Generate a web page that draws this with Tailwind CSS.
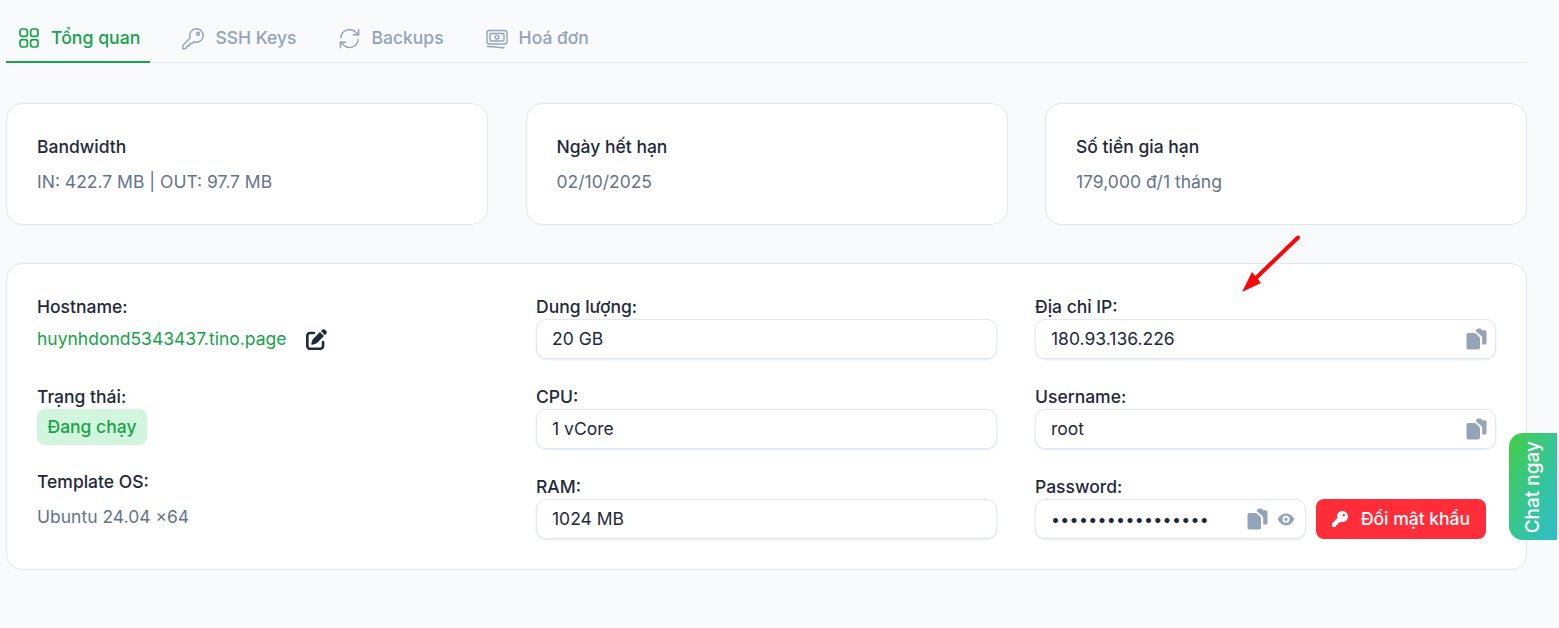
<!DOCTYPE html>
<html lang="vi">
<head>
<meta charset="utf-8">
<title>Tổng quan</title>
<script src="https://cdn.jsdelivr.net/npm/@tailwindcss/browser@4"></script>
</head>
<body class="bg-[#f8fafc] font-['Inter',sans-serif] text-[#1e293b] text-[17.5px] overflow-hidden">
<div class="relative w-[1559px] h-[628px] overflow-hidden">
  <div class="ml-[6px] w-[1521px] pt-[13px]">
    <nav class="flex h-[50px] border-b border-[#e2e8f0]">
      <div class="flex items-center gap-[11px] pl-[12px] pr-[10px] pt-[2px] h-[50px] border-b-2 border-[#16a34a] text-[#16a34a] font-medium">
        <svg class="w-[22px] h-[22px]" viewBox="0 0 22 22" fill="none" stroke="currentColor" stroke-width="1.7"><rect x="2" y="2" width="7.4" height="7.4" rx="2.4"/><rect x="12.6" y="2" width="7.4" height="7.4" rx="2.4"/><rect x="2" y="12.6" width="7.4" height="7.4" rx="2.4"/><rect x="12.6" y="12.6" width="7.4" height="7.4" rx="2.4"/></svg>
        <span class="text-[17.7px]">Tổng quan</span>
      </div>
      <div class="flex items-center gap-[10px] ml-[31px] pt-[2px] h-[49px] text-[#94a3b8] font-medium">
        <svg class="w-[24px] h-[24px]" viewBox="0 0 24 24" fill="none" stroke="currentColor" stroke-width="1.4" stroke-linejoin="round" stroke-linecap="round"><path d="M15.500 1.800c3.700 0 6.700 3 6.700 6.700s-3 6.700-6.700 6.700c-.9 0-1.800-.2-2.600-.5l-1.700 1.800H9l-.6 2.200H6.200l-.7 2.100-1.700.9H1.800v-3.200l7.500-7.800c-.3-.8-.5-1.500-.5-2.400 0-3.700 3-6.500 6.700-6.500z"/><circle cx="17" cy="6.800" r="1.500"/></svg>
        <span>SSH Keys</span>
      </div>
      <div class="flex items-center gap-[11px] ml-[41px] pt-[2px] h-[49px] text-[#94a3b8] font-medium">
        <svg class="w-[23px] h-[23px]" viewBox="0 0 24 24" fill="none" stroke="currentColor" stroke-width="1.5" stroke-linecap="round" stroke-linejoin="round"><path d="M3 11a9 9 0 0 1 15.500-5.500L21.500 8"/><path d="M21.500 2.500V8H16"/><path d="M21 13a9 9 0 0 1-15.500 5.500L2.500 16"/><path d="M2.500 21.500V16H8"/></svg>
        <span>Backups</span>
      </div>
      <div class="flex items-center gap-[10px] ml-[41px] pt-[2px] h-[49px] text-[#94a3b8] font-medium">
        <svg class="w-[24px] h-[24px]" viewBox="0 0 24 24" fill="none" stroke="currentColor" stroke-width="1.4" stroke-linecap="round" stroke-linejoin="round"><rect x="2" y="3.500" width="20" height="13.500" rx="2.500"/><rect x="5" y="6.500" width="14" height="7.500" rx="1"/><circle cx="12" cy="10.200" r="1.800"/><path d="M2.500 19.500c5 .2 10 .4 15 1.400.8.200 1.300-.2 1.500-1"/></svg>
        <span>Hoá đơn</span>
      </div>
    </nav>

    <section class="grid grid-cols-3 gap-[37.5px] mt-[40px]">
      <div class="h-[122px] bg-white border border-[#e2e8f0] rounded-[16px] px-[30px] pt-[31px] flex flex-col gap-[11px]">
        <div class="font-medium leading-6">Bandwidth</div>
        <div class="text-[#64748b] leading-6">IN: 422.7 MB | OUT: 97.7 MB</div>
      </div>
      <div class="h-[122px] bg-white border border-[#e2e8f0] rounded-[16px] px-[30px] pt-[31px] flex flex-col gap-[11px]">
        <div class="font-medium leading-6">Ngày hết hạn</div>
        <div class="text-[#64748b] leading-6">02/10/2025</div>
      </div>
      <div class="h-[122px] bg-white border border-[#e2e8f0] rounded-[16px] px-[30px] pt-[31px] flex flex-col gap-[11px]">
        <div class="font-medium leading-6">Số tiền gia hạn</div>
        <div class="text-[#64748b] leading-6">179,000 đ/1 tháng</div>
      </div>
    </section>

    <section class="mt-[38px] h-[307px] bg-white border border-[#e2e8f0] rounded-[16px] pl-[30px] pt-[31px] grid grid-cols-[499px_499px_492px]">
      <div class="flex flex-col">
        <div class="leading-6 font-medium">Hostname:</div>
        <div class="flex items-center h-[40px] text-[#16a34a]">
          <span>huynhdond5343437.tino.page</span>
          <svg class="w-[21px] h-[21px] ml-[20px] text-[#1e293b]" viewBox="0 0 512 512" fill="currentColor"><path d="M471.6 21.7c-21.9-21.9-57.3-21.9-79.2 0L362.3 51.7l97.9 97.9 30.1-30.1c21.9-21.9 21.9-57.3 0-79.2L471.6 21.7zm-299.2 220c-6.1 6.1-10.8 13.6-13.5 21.9l-29.6 88.8c-2.9 8.6-.6 18.1 5.8 24.6s15.9 8.7 24.6 5.8l88.8-29.6c8.2-2.7 15.7-7.4 21.9-13.5L437.7 172.3 339.7 74.3 172.4 241.7zM96 64C43 64 0 107 0 160V416c0 53 43 96 96 96H352c53 0 96-43 96-96V320c0-17.7-14.3-32-32-32s-32 14.3-32 32v96c0 17.7-14.3 32-32 32H96c-17.7 0-32-14.3-32-32V160c0-17.7 14.3-32 32-32h96c17.7 0 32-14.3 32-32s-14.3-32-32-32H96z"/></svg>
        </div>
        <div class="leading-6 font-medium mt-[26px]">Trạng thái:</div>
        <div class="w-[110px] h-[36px] rounded-[8px] bg-[#d1f5dd] text-[#16a34a] font-medium flex items-center justify-center">Đang chạy</div>
        <div class="leading-6 font-medium mt-[25px]">Template OS:</div>
        <div class="leading-6 text-[#64748b] mt-[11px]">Ubuntu 24.04 x64</div>
      </div>

      <div class="flex flex-col gap-[26px]">
        <div class="w-[461px]">
          <div class="leading-6 font-medium">Dung lượng:</div>
          <div class="h-[40px] bg-white border border-[#e2e8f0] rounded-[10px] shadow-[0_1px_2px_#cbd5e180] px-[15px] flex items-center">20 GB</div>
        </div>
        <div class="w-[461px]">
          <div class="leading-6 font-medium">CPU:</div>
          <div class="h-[40px] bg-white border border-[#e2e8f0] rounded-[10px] shadow-[0_1px_2px_#cbd5e180] px-[15px] flex items-center">1 vCore</div>
        </div>
        <div class="w-[461px]">
          <div class="leading-6 font-medium">RAM:</div>
          <div class="h-[40px] bg-white border border-[#e2e8f0] rounded-[10px] shadow-[0_1px_2px_#cbd5e180] px-[15px] flex items-center">1024 MB</div>
        </div>
      </div>

      <div class="flex flex-col gap-[26px]">
        <div class="w-[461px]">
          <div class="leading-6 font-medium">Địa chỉ IP:</div>
          <div class="h-[40px] bg-white border border-[#e2e8f0] rounded-[10px] shadow-[0_1px_2px_#cbd5e180] pl-[15px] pr-[8px] flex items-center justify-between">
            <span>180.93.136.226</span>
            <svg class="w-[21px] h-[22px] text-[#94a3b8]" viewBox="0 0 21 22" fill="currentColor"><path d="M9 2.200h1.300C10.600 1 11.500.4 12.500.4h1.300c1 0 1.800.6 2.100 1.800h2.800c1.200 0 1.800.7 1.800 1.800v10.700c0 1.200-.7 1.800-1.800 1.800h-2.500V9.800c0-.8-.3-1.400-.8-1.900L10 3.200C9.700 2.900 9.400 2.500 9 2.200z"/><path d="M2.500 5h6c.7 0 1.200.3 1.700.8l3 3c.5.500.8 1 .8 1.700v9c0 1.200-.8 2-2 2H2.500c-1.200 0-2-.8-2-2V7c0-1.200.8-2 2-2z"/></svg>
          </div>
        </div>
        <div class="w-[461px]">
          <div class="leading-6 font-medium">Username:</div>
          <div class="h-[40px] bg-white border border-[#e2e8f0] rounded-[10px] shadow-[0_1px_2px_#cbd5e180] pl-[15px] pr-[8px] flex items-center justify-between">
            <span>root</span>
            <svg class="w-[21px] h-[22px] text-[#94a3b8]" viewBox="0 0 21 22" fill="currentColor"><path d="M9 2.200h1.300C10.600 1 11.500.4 12.500.4h1.300c1 0 1.800.6 2.100 1.800h2.800c1.200 0 1.800.7 1.800 1.800v10.700c0 1.200-.7 1.800-1.800 1.800h-2.500V9.800c0-.8-.3-1.400-.8-1.900L10 3.200C9.700 2.900 9.400 2.500 9 2.200z"/><path d="M2.500 5h6c.7 0 1.200.3 1.700.8l3 3c.5.500.8 1 .8 1.700v9c0 1.200-.8 2-2 2H2.500c-1.200 0-2-.8-2-2V7c0-1.200.8-2 2-2z"/></svg>
          </div>
        </div>
        <div class="w-[461px]">
          <div class="leading-6 font-medium">Password:</div>
          <div class="flex gap-[10px]">
            <div class="w-[271px] h-[40px] bg-white border border-[#e2e8f0] rounded-[10px] shadow-[0_1px_2px_#cbd5e180] pl-[15px] pr-[10px] flex items-center">
              <span class="flex-1 text-base tracking-[0.3px]">•••••••••••••••••</span>
              <svg class="w-[21px] h-[22px] text-[#94a3b8]" viewBox="0 0 21 22" fill="currentColor"><path d="M9 2.200h1.300C10.600 1 11.500.4 12.500.4h1.300c1 0 1.800.6 2.100 1.800h2.800c1.200 0 1.800.7 1.800 1.800v10.700c0 1.200-.7 1.800-1.800 1.800h-2.500V9.800c0-.8-.3-1.400-.8-1.900L10 3.200C9.700 2.900 9.400 2.500 9 2.200z"/><path d="M2.500 5h6c.7 0 1.200.3 1.700.8l3 3c.5.500.8 1 .8 1.700v9c0 1.200-.8 2-2 2H2.500c-1.200 0-2-.8-2-2V7c0-1.200.8-2 2-2z"/></svg>
              <svg class="w-[18px] h-[13px] ml-[9px] text-[#94a3b8]" viewBox="0 0 17 13" fill="currentColor"><path fill-rule="evenodd" d="M8.500.5c3.800 0 6.800 2.500 8.300 5.500-1.500 3.500-4.500 6.500-8.300 6.500S1.700 9.500.2 6C1.700 3 4.700.5 8.500.5zm0 2.200a3.500 3.500 0 1 0 0 7 3.500 3.500 0 0 0 0-7zm0 1.800a1.700 1.700 0 1 1 0 3.400 1.700 1.700 0 0 1 0-3.400z"/></svg>
            </div>
            <div class="w-[170px] h-[40px] bg-[#ff2d3a] rounded-[8px] text-white font-medium flex items-center justify-center gap-[13px]">
              <svg class="w-[16px] h-[16px]" viewBox="0 0 512 512" fill="currentColor"><path d="M336 352c97.2 0 176-78.8 176-176S433.2 0 336 0S160 78.8 160 176c0 18.7 2.9 36.800 8.300 53.700L7 391c-4.500 4.500-7 10.600-7 17v80c0 13.300 10.700 24 24 24h80c13.300 0 24-10.700 24-24V448h40c13.300 0 24-10.700 24-24V384h40c6.400 0 12.500-2.500 17-7l33.300-33.300c16.900 5.400 35 8.300 53.700 8.300zM376 96a40 40 0 1 1 0 80 40 40 0 1 1 0-80z"/></svg>
              <span>Đổi mật khẩu</span>
            </div>
          </div>
        </div>
      </div>
    </section>
  </div>

  <svg class="absolute left-[1238px] top-[232px] w-[66px] h-[66px] pointer-events-none" viewBox="0 0 66 66"><path d="M60 5.500 17 47" stroke="#fb0707" stroke-width="4" stroke-linecap="round"/><path d="M4 60 14 40 23 51z" fill="#fb0707"/></svg>

  <div class="absolute left-[1509px] top-[433px] w-[48px] h-[107px] rounded-l-[14px] bg-linear-to-br from-[#46cc38] to-[#2fbdcb] text-white text-[19px] font-medium flex items-center justify-center pt-[1px]">
    <span class="[writing-mode:vertical-rl] rotate-180 whitespace-nowrap">Chat ngay</span>
  </div>
</div>
</body>
</html>
